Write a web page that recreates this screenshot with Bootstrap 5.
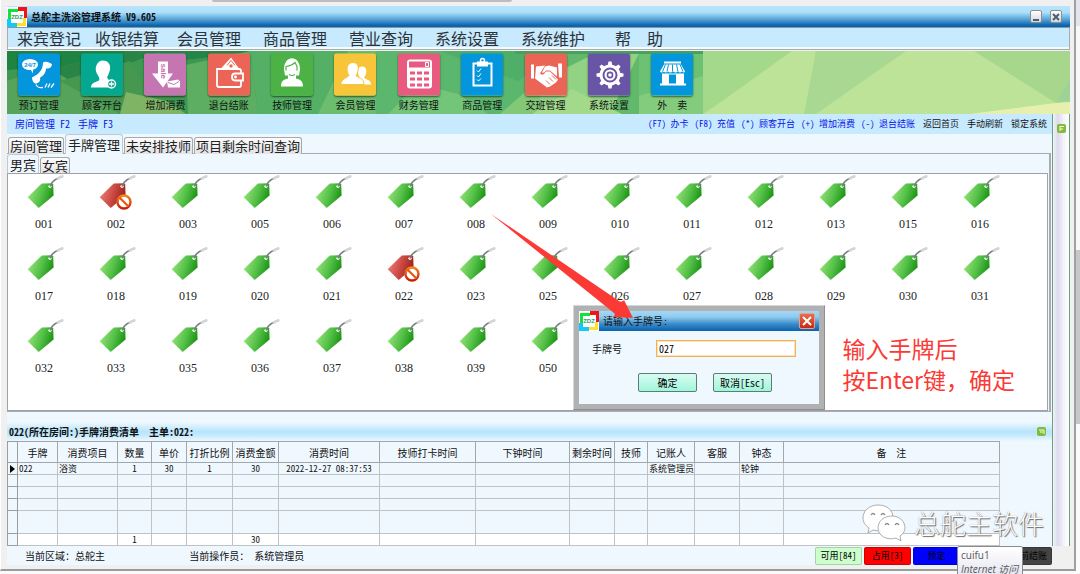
<!DOCTYPE html>
<html lang="zh-CN">
<head>
<meta charset="utf-8">
<meta name="viewport" content="width=device-width, initial-scale=1">
<title>总舵主洗浴管理系统</title>
<link rel="stylesheet" href="https://cdn.jsdelivr.net/npm/bootstrap@5.3.0/dist/css/bootstrap.min.css">
<style>
  :root { --ice:#f0f8ff; --sky:#c8eaff; --line:#a9abae; --frame:#f0f0f0; }
  body { font-family:"Noto Sans Mono CJK SC","Noto Sans CJK SC",sans-serif; font-size:10px; line-height:12px; color:#111; background:#fafafa; overflow:hidden; }
  button, input { font-family:inherit; }
  a { text-decoration:none; color:inherit; }
  .app-window { background:var(--frame); border-right:2px solid #9fa0a2; border-bottom:2px solid #9a9b9d; border-left:1px solid #fff; padding:6px 4px 4px 6px; margin-bottom:3px; min-width:0; }
  .behind-tab { position:absolute; top:0; left:212px; width:300px; height:2px; background:#bdbdbd; border-radius:0 0 3px 3px; }
  .desk-edge { width:4px; background:#fbfbfb; }
  .desk-edge .edge-top { height:26px; background:#e4e5ec; }
  .desk-edge .edge-gap { height:224px; background:#f8f8f8; }
  .desk-edge .edge-thumb { height:174px; background:#c6c7c9; }

  .title-bar { height:21px; background:linear-gradient(#b9e4fc 0,#aee0fb 30%,#5ba6d8 62%,#0a66b2 92%,#0a62ab 100%); font-weight:700; }
  .win-btn { width:12px; height:13px; padding:0; border:1px solid #8a8f94; border-radius:2px; background:linear-gradient(#fff,#d3d6da); line-height:0; }
  .menu-strip { height:23px; background:var(--sky); border:1px solid var(--line); border-top-color:#8f9498; box-shadow:inset 0 -2px #f4faff; display:grid; grid-template-columns:78px 82px 86px 86px 86px 86px 94px 60px; padding-left:9px; font-size:16px; line-height:20px; color:#2c3338; }

  .ribbon { height:63px; margin-top:1px; position:relative; background:#a9d98f; overflow:hidden; }
  .ribbon-art { position:absolute; inset:0; width:100%; height:100%; }
  .ribbon-items { position:relative; display:grid; grid-template-columns:repeat(11,1fr); width:697px; padding-top:2px; }
  .ribbon-btn { background:none; border:0; padding:0; display:flex; flex-direction:column; align-items:center; gap:3px; font-size:10px; line-height:12px; color:#111; white-space:pre; }
  .ribbon-btn svg { width:42px; height:43px; border-radius:3px; box-shadow:0 1px 2px rgba(0,0,0,.55); color:#fff; }

  .short-strip { height:20px; background:var(--sky); font-size:9px; line-height:20px; padding:0 5px 0 8px; white-space:nowrap; }
  .key-links { color:#0a14e6; }
  .side-rail { width:18px; background:linear-gradient(90deg,#f3f1fb,#dcdaec 30%,#f6f4fb 70%,#fff); border-left:1px solid #69a478; border-right:1px solid #69a478; padding:10px 0 0 4px; margin-bottom:19px; }
  .mini-toggle { width:9px; height:9px; border:0; border-radius:2px; padding:0; background:#84b93c; display:block; line-height:0; }

  .tab-strip { gap:1px; padding:0 0 0 1px; margin-bottom:-1px; position:relative; align-items:flex-end; }
  .tab-strip button { border:1px solid #a6a8aa; border-bottom:0; border-radius:3px 3px 0 0; background:linear-gradient(#fdfdfd,#e2e3e5); font-size:13px; line-height:16px; padding:0 1px; height:17px; white-space:nowrap; color:#222; }
  .tab-strip button.active { background:var(--ice); height:20px; line-height:18px; border-color:#c4c9cd; padding:0 2px; }
  .outer-pane { border:1px solid var(--line); border-right-width:2px; border-left:0; margin-right:1px; }
  .sub-tabs { padding-left:0; }
  .tag-pane { background:#fff; border:1px solid #9fa2a6; margin-right:1px; position:relative; }
  .tag-grid { display:grid; grid-template-columns:repeat(auto-fill,72px); grid-auto-rows:72px; }
  .tag-cell { border:0; background:none; padding:0; display:flex; flex-direction:column; align-items:center; gap:6px; font:12px/12px "Liberation Serif",serif; color:#222; }
  .tag-cell svg { width:40px; height:38px; }

  .pointer-arrow { position:absolute; right:411px; bottom:87px; width:150px; height:112px; z-index:5; pointer-events:none; }
  .hint { position:absolute; right:32px; bottom:15px; color:#fb3a36; font:23px/31px "Noto Sans CJK SC",sans-serif; white-space:nowrap; }
  .tag-dialog { position:absolute; right:222px; bottom:0; width:252px; border:1px solid #d6d6d6; border-right-color:#8e8e8e; border-bottom-color:#8e8e8e; background:#b0b1b2; padding:5px; z-index:4; }
  .dialog-body { background:var(--ice); padding:9px 23px 12px 13px; }
  .dialog-title { height:20px; background:linear-gradient(#a5d8f6,#8ecbf0 30%,#3b8bc8 65%,#0a62ab); }
  .dialog-close { width:16px; height:16px; padding:0; border:1px solid #e7a08d; border-radius:2px; background:linear-gradient(#ea6d4d,#c9290f); line-height:0; }
  .tag-input { width:140px; height:17px; border:1px solid #f2b253; box-shadow:inset 0 0 0 1px #fde3b8; padding:0 2px; font-size:10px; background:#fff; outline:0; }
  .mint-btn { width:59px; height:19px; border:1px solid #5d7d74; border-radius:2px; background:linear-gradient(#d9fbf1,#a0f6da); font-size:10px; line-height:16px; padding:0; color:#000; }

  .list-head { height:19px; margin-top:10px; padding:0 6px 0 2px; background:linear-gradient(#f0f8ff,#b8e5fb 50%,#c4e9fd 70%,#ecf8ff); font-weight:700; }
  .bill { width:95%; table-layout:fixed; border-collapse:collapse; font-size:9px; line-height:11px; }
  .bill th, .bill td { border:1px solid #c0c2c4; padding:0 1px; text-align:center; white-space:nowrap; height:12px; overflow:hidden; }
  .bill th { font-size:10px; font-weight:400; height:21px; border-color:#a4a6a9; }
  .bill tr > :first-child { border-color:#9b9da0; }
  .bill .txt { text-align:left; }
  .bill .roomy td { height:23px; }
  .bill tfoot td { background:#fff; }
  .bill tfoot td:first-child { background:var(--ice); }

  .status-strip { height:19px; padding-left:18px; }
  .area-note { flex:0 0 16%; }
  .state-group { flex:0 0 237px; gap:2px; }
  .state-btn { width:47px; height:18px; border:1px solid rgba(0,0,0,.18); border-radius:2px; font-size:9px; line-height:16px; padding:0; color:#000; }
  .net-tip { position:absolute; left:142px; top:-1px; width:66px; height:32px; border:1px solid #8b8b8b; border-radius:2px; background:linear-gradient(#fff,#e4e5f0); font:10px/14px "Open Sans","Noto Sans CJK SC",sans-serif; color:#575757; padding:1px 3px; white-space:nowrap; z-index:6; }
  .brand-mark { position:absolute; right:8px; bottom:4px; font:300 26px/32px "Noto Sans CJK SC",sans-serif; color:#fff; text-shadow:1px 1px 1px #666, 0 0 1px #777; white-space:nowrap; }
</style>
</head>
<body class="vh-100 d-flex">

<svg width="0" height="0" class="position-absolute" aria-hidden="true">
  <defs>
    <linearGradient id="leaf" x1="0" y1=".3" x2="1" y2=".6"><stop offset="0" stop-color="#96e878"/><stop offset=".55" stop-color="#52be46"/><stop offset="1" stop-color="#15900f"/></linearGradient>
    <linearGradient id="brick" x1="0" y1=".3" x2="1" y2=".6"><stop offset="0" stop-color="#ee8078"/><stop offset=".5" stop-color="#cb4a44"/><stop offset="1" stop-color="#981c14"/></linearGradient>
    <linearGradient id="ember" x1="0" y1="0" x2="0" y2="1"><stop offset="0" stop-color="#f88420"/><stop offset="1" stop-color="#c81e08"/></linearGradient>
    <symbol id="tag-string" viewBox="0 0 40 38"><circle cx="26" cy="12.300" r="1.600" fill="#fff"/><path d="M26 12.500C28 6 33 4.500 38.500 2.500" fill="none" stroke="#77797d" stroke-width="1.600"/><path d="M33 5.500c2-2.500 4-3 6.500-3.500" fill="none" stroke="#d5d5d5" stroke-width="2.500"/></symbol>
    <symbol id="tag-free" viewBox="0 0 40 38"><path d="M3.700 23.300 17.700 9.500 28 9.300l1.200 1.200.4 11L14.700 33.900z" fill="url(#leaf)"/><use href="#tag-string"/></symbol>
    <symbol id="tag-busy" viewBox="0 0 40 38"><path d="M3.700 23.300 17.700 9.500 28 9.300l1.200 1.200.4 11L14.700 33.900z" fill="url(#brick)"/><use href="#tag-string"/><circle cx="28" cy="28" r="6.500" fill="#fff" stroke="url(#ember)" stroke-width="2.400"/><path d="m23.500 23.500 9 9" stroke="#e85a12" stroke-width="2.200"/></symbol>
    <symbol id="zdz" viewBox="0 0 20 20"><path fill="#fff" d="M0 0h20v20H0z"/><path fill="#12e23a" d="M1 2h10v3H4v7H1z"/><path fill="#f01414" d="M11 0h9v11h-3V4h-6z"/><path fill="#fde12c" d="M19 11v8H9v-3h7v-5z"/><path fill="#14c8fa" d="M0 12h4v4h6v4H0z"/><text x="10" y="12" text-anchor="middle" font-family="Liberation Sans" font-weight="700" font-size="6" fill="#2c9c68">ZDZ</text></symbol>
  </defs>
</svg>

<div class="behind-tab"></div>
<main class="app-window flex-grow-1 d-flex flex-column">
  <header class="title-bar d-flex align-items-center pe-2 flex-shrink-0">
    <svg width="20" height="20" aria-hidden="true"><use href="#zdz"/></svg>
    <span class="me-auto ps-1 lh-1">总舵主洗浴管理系统 V9.605</span>
    <button class="win-btn me-2" aria-label="最小化"><svg width="10" height="10"><path d="M2 8h6" stroke="#4b6072" stroke-width="2"/></svg></button>
    <button class="win-btn" aria-label="关闭"><svg width="10" height="10"><path d="m2 2 6 6m0-6L2 8" stroke="#4b6072" stroke-width="2"/></svg></button>
  </header>

  <nav class="menu-strip flex-shrink-0" aria-label="主菜单">
    <a href="#">来宾登记</a><a href="#">收银结算</a><a href="#">会员管理</a><a href="#">商品管理</a><a href="#">营业查询</a><a href="#">系统设置</a><a href="#">系统维护</a><a href="#">帮　助</a>
  </nav>

  <section class="ribbon flex-shrink-0">
    <svg class="ribbon-art" viewBox="7 50 1063 63" preserveAspectRatio="none" aria-hidden="true">
      <path fill="#3f9852" d="M7 50h270v63H7z"/><path fill="#1f8442" d="M7 50h125l-73 16-52 3z"/><path fill="#2a8446" d="m59 66 73-16h30l-32 12-71 20z"/><path fill="#56a45c" d="m7 80 40-14 80 47H7z"/><path fill="#46974f" d="m60 80 70-20 30 53h-40z"/><path fill="#7fb465" d="m120 113 6-22 40 9 20 13z"/><path fill="#258448" d="M160 50h95l-60 8-40 3z"/><path fill="#5dae62" d="m186 64 64-14 8 63h-70z"/>
      <path fill="#53b064" d="M250 50h150l-20 63H258z"/><path fill="#6cbd6e" d="m318 113 30-63h60l-20 63z"/><path fill="#5cb76e" d="M376 50h190v63H376z"/><path fill="#73c579" d="m388 113 30-30 40 10 30 20z"/><path fill="#4fae68" d="M440 50h120l-42 30z"/><path fill="#82c877" d="m500 113 40-35 60 35z"/><path fill="#62b96b" d="M560 50h143v63H560z"/><path fill="#92d285" d="m540 80 60-30h40l-30 63h-70z"/><path fill="#a2d98a" d="m572 88 50 25h-90z"/><path fill="#6cc272" d="M639 50h64v63h-64z"/><path fill="#83cc7d" d="m639 95 64-20v38h-64z"/><path fill="#4aa05f" d="M515 50h188v3H515z"/>
      <path fill="#a4d98b" d="M703 50h112l-8 63H703z"/><path fill="#bde398" d="m718 103 74-53h24l-11 63H703z"/><path fill="#a9d892" d="M816 50h90l-90 63h-12z"/><path fill="#bde398" d="m906 50 70 0 94 52v11H816z"/><path fill="#a7d78d" d="M974 50h96v30l-14 22z"/><path fill="#9fd297" d="m1070 78-14 24 14-2z"/><path fill="#e6efae" d="m970 113 86-11 14-1v12z"/>
    </svg>
    <div class="ribbon-items">
      <button class="ribbon-btn"><svg viewBox="0 0 42 42"><path fill="#0496dc" d="M0 0h42v42H0z"/><ellipse cx="12" cy="11" rx="8" ry="5.500" fill="#fff"/><path d="m12 15 3 5 0-5z" fill="#fff"/><text x="12" y="13.500" text-anchor="middle" font-family="Liberation Sans" font-weight="700" font-size="6" fill="#0496dc">24/7</text><path fill="#fff" d="M25 9c2-2 8 0 9 2-1 4-3 4-6 4 0 4-3 8-6 9 1 4-2 6-5 6-2-1-3-4-3-6 3-2 6-3 8-6 2-2 3-6 3-9z"/><path d="M18 31c2 4 4 3 7 3m2 0 2-4m1 4 2-4m1 4 3-4" fill="none" stroke="#fff" stroke-width="1.300"/></svg>预订管理</button>
      <button class="ribbon-btn"><svg viewBox="0 0 42 42"><path fill="#04a790" d="M0 0h42v42H0z"/><path fill="#fff" d="M22 7c5 0 8 4 7 9-1 4-2 6-3 8l3 4-1 6H10c0-4 3-5 8-7 1-2 0-3-1-5-5-7-1-15 5-15z"/><circle cx="30.500" cy="30.500" r="4" fill="#04a790" stroke="#fff" stroke-width="1.500"/><path d="M30.500 28v5M28 30.500h5" stroke="#fff" stroke-width="1.400"/></svg>顾客开台</button>
      <button class="ribbon-btn"><svg viewBox="0 0 42 42"><path fill="#c575b1" d="M0 0h42v42H0z"/><path fill="#fff" d="M14 8h10v12h5L19 34 8 20h6z"/><text transform="translate(17 10) rotate(90)" font-family="Liberation Sans" font-weight="700" font-size="8" fill="#c575b1">sale</text><path fill="#fff" d="m23 28 11-2 2 2v6H24z"/><path d="m24 29 6 2 5-3" fill="none" stroke="#c575b1"/></svg>增加消费</button>
      <button class="ribbon-btn"><svg viewBox="0 0 42 42"><path fill="#eb6556" d="M0 0h42v42H0z"/><path d="m13 15 10-11 8 11" fill="#fff"/><path d="m19 12 4-5 4 5" fill="none" stroke="#eb6556"/><circle cx="23" cy="12.500" r="1.700" fill="#eb6556"/><path d="M9 15.500h22q2 0 2 2v14q0 2-2 2H11q-2 0-2-2z" fill="#eb6556" stroke="#fff" stroke-width="1.800"/><path d="M35 20h-8q-3 0-3 3.500t3 3.500h8z" fill="#eb6556" stroke="#fff" stroke-width="1.800"/><circle cx="27.500" cy="23.500" r="1.400" fill="#fff"/></svg>退台结账</button>
      <button class="ribbon-btn"><svg viewBox="0 0 42 42"><path fill="#4cb245" d="M0 0h42v42H0z"/><path fill="#fff" d="M13 16c0-15 16-15 16 0l-1 6h-3v3c5 1 7 3 7 8H10c0-5 2-7 7-8v-3h-3z"/><path d="M15 17v-4q6-1 9-4l2 4v4m-8 4q3 2 6 0" fill="none" stroke="#4cb245" stroke-width="1.200"/></svg>技师管理</button>
      <button class="ribbon-btn"><svg viewBox="0 0 42 42"><path fill="#f8c53a" d="M0 0h42v42H0z"/><path fill="#fff" d="M28 13c6 0 5 8 2 11 1 2 7 2 7 7h-9l-3-8c-2-5-1-10 3-10z"/><path fill="#fff" stroke="#f8c53a" d="M19 9c7 0 6 9 3 13 1 2 8 2 8 9H7c0-6 7-7 8-9-3-4-3-13 4-13z"/></svg>会员管理</button>
      <button class="ribbon-btn"><svg viewBox="0 0 42 42"><path fill="#e85a80" d="M0 0h42v42H0z"/><rect x="9" y="6" width="25" height="29" rx="3" fill="#fff"/><path d="M11 8h21v6H11zM12 18h5v3h-5zm7 0h5v3h-5zm7 0h5v3h-5zM12 24h5v3h-5zm7 0h5v3h-5zm7 0h5v3h-5zM12 30h5v3h-5zm7 0h5v3h-5zm7 0h5v3h-5z" fill="#e85a80"/><path d="M27.500 9h3v4h-3z" fill="none" stroke="#fff"/></svg>财务管理</button>
      <button class="ribbon-btn"><svg viewBox="0 0 42 42"><path fill="#0496dc" d="M0 0h42v42H0z"/><rect x="12.500" y="10" width="18" height="22" fill="none" stroke="#fff" stroke-width="2"/><path d="M16 8h11v5H16z" fill="#fff"/><circle cx="21.500" cy="7" r="2" fill="none" stroke="#fff" stroke-width="1.500"/><path d="m16 17 1.500 1.500L20 15m-4 7 1.500 1.500L20 20m-4 6 1.500 1.500L20 25" fill="none" stroke="#fff"/></svg>商品管理</button>
      <button class="ribbon-btn"><svg viewBox="0 0 42 42"><path fill="#eb6556" d="M0 0h42v42H0z"/><path fill="#fff" d="M6 11h3v14H6zm27-1h4v14h-3zM11 13l9-1-5 8q3 3 6-2h4l8 8-2 3-3 2-3 2-3 1-12-9z"/><path fill="#fff" d="m20 13 4-1 8 2v9l-7-6h-4q-2 3-4 2z"/><path d="m21 27 4 4m-1-7 4 4m-1-6 4 4" stroke="#eb6556"/></svg>交班管理</button>
      <button class="ribbon-btn"><svg viewBox="0 0 42 42"><path fill="#6955a5" d="M0 0h42v42H0z"/><g fill="#fff"><path id="cog" d="m19.500 13 1-5h3l1 5v17l-1 5h-3l-1-5z"/><use href="#cog" transform="rotate(45 22 21.500)"/><use href="#cog" transform="rotate(90 22 21.500)"/><use href="#cog" transform="rotate(135 22 21.500)"/><circle cx="22" cy="21.500" r="10.500"/></g><circle cx="22" cy="21.500" r="6.500" fill="none" stroke="#6955a5" stroke-width="2"/><circle cx="22" cy="21.500" r="2.600" fill="none" stroke="#6955a5" stroke-width="1.600"/></svg>系统设置</button>
      <button class="ribbon-btn"><svg viewBox="0 0 42 42"><path fill="#0496dc" d="M0 0h42v42H0z"/><path fill="#fff" d="M13 8h17v2H13zm0 3h17l4 7q-1 2-3 0-2 2-4 0-2 2-5 0-3 2-5 0-2 2-4 0-3 2-4 0zM11 20h22v10h2v2H9v-2h2z"/><path fill="#0496dc" d="M18 21h7v9h-7z"/><path d="m14.500 11-3 7m6-7-1.500 7m5.500-7v7m4-7 1.500 7m2-7 3 7" stroke="#0496dc"/></svg>外　卖</button>
    </div>
  </section>

  <div class="d-flex flex-grow-1">
    <div class="d-flex flex-column flex-grow-1" style="background:var(--ice);min-width:0">
      <nav class="short-strip d-flex flex-shrink-0" aria-label="快捷键">
        <span class="key-links d-flex gap-2 me-auto" style="font-size:10px"><a href="#">房间管理 F2</a><a href="#">手牌 F3</a></span>
        <span class="key-links d-flex me-2" style="gap:6px"><a href="#">(F7) 办卡</a><a href="#">(F8) 充值</a><a href="#">(*) 顾客开台</a><a href="#">(+) 增加消费</a><a href="#">(-) 退台结账</a></span>
        <span class="d-flex gap-2"><a href="#">返回首页</a><a href="#">手动刷新</a><a href="#">锁定系统</a></span>
      </nav>

      <div class="tab-strip d-flex" role="tablist">
        <button role="tab">房间管理</button><button role="tab" class="active">手牌管理</button><button role="tab">未安排技师</button><button role="tab">项目剩余时间查询</button>
      </div>
      <section class="outer-pane flex-grow-1 d-flex flex-column">
        <div class="tab-strip sub-tabs d-flex" role="tablist">
          <button role="tab" class="active">男宾</button><button role="tab">女宾</button>
        </div>
        <div class="tag-pane flex-grow-1">
          <div class="tag-grid" id="tags"></div>

          <svg class="pointer-arrow" viewBox="488 211 150 112" aria-hidden="true"><path fill="#fb3a36" d="m493 214 128 87c2 1 3 1 5-1l9 18-20-1q3-2 1-4z"/></svg>
          <p class="hint mb-0">输入手牌后<br>按Enter键，确定</p>

          <form class="tag-dialog" onsubmit="return false">
            <div class="dialog-title d-flex align-items-center">
              <svg width="20" height="20" aria-hidden="true"><use href="#zdz"/></svg>
              <span class="me-auto ps-1">请输入手牌号:</span>
              <button type="button" class="dialog-close me-1" aria-label="关闭"><svg width="14" height="14"><path d="m3 3 8 8m0-8-8 8" stroke="#fff" stroke-width="2"/></svg></button>
            </div>
            <div class="dialog-body">
              <div class="d-flex justify-content-between align-items-center">
                <label for="tagNo">手牌号</label><input id="tagNo" class="tag-input" type="text" value="027" autofocus>
              </div>
              <div class="d-flex justify-content-end mt-3">
                <button type="submit" class="mint-btn me-3">确定</button><button type="button" class="mint-btn me-4">取消[Esc]</button>
              </div>
            </div>
          </form>
        </div>
      </section>

      <section class="position-relative flex-shrink-0">
        <div class="list-head d-flex align-items-center justify-content-between">
          <span>022(所在房间:)手牌消费清单　主单:022:</span>
          <button class="mini-toggle" aria-label="收起"><svg width="9" height="9"><path d="M2 3h5M7 3v4M3 5h3" stroke="#f4ffd8" fill="none"/></svg></button>
        </div>
        <table class="bill">
          <colgroup><col style="width:10px"><col style="width:40px"><col style="width:60px"><col style="width:34px"><col style="width:35px"><col style="width:46px"><col style="width:46px"><col style="width:101px"><col style="width:96px"><col style="width:94px"><col style="width:45px"><col style="width:33px"><col style="width:47px"><col style="width:45px"><col style="width:44px"><col></colgroup>
          <thead><tr><th></th><th>手牌</th><th>消费项目</th><th>数量</th><th>单价</th><th>打折比例</th><th>消费金额</th><th>消费时间</th><th>技师打卡时间</th><th>下钟时间</th><th>剩余时间</th><th>技师</th><th>记账人</th><th>客服</th><th>钟态</th><th>备　注</th></tr></thead>
          <tbody id="billRows">
            <tr><td><svg width="5" height="8" class="d-block mx-auto"><path d="M0 0v8l5-4z"/></svg></td><td class="txt">022</td><td class="txt">浴资</td><td>1</td><td>30</td><td>1</td><td>30</td><td>2022-12-27 08:37:53</td><td></td><td></td><td></td><td></td><td class="txt">系统管理员</td><td></td><td class="txt">轮钟</td><td></td></tr>
          </tbody>
          <tfoot><tr><td></td><td></td><td></td><td>1</td><td></td><td></td><td>30</td><td></td><td></td><td></td><td></td><td></td><td></td><td></td><td></td><td></td></tr></tfoot>
        </table>
        <div class="brand-mark d-flex align-items-center gap-2">
          <svg width="44" height="38" viewBox="0 0 44 38" aria-hidden="true"><g fill="#fff" stroke="#999" stroke-width=".8"><path d="M16 1C7 1 1 7 1 14c0 4 2 7 6 10l-1 5 5-3c13 3 20-4 20-12S25 1 16 1z"/><path d="M30 12c-8 0-14 5-14 12s8 13 18 10l5 3-1-5c3-2 5-5 5-8 0-7-6-12-13-12z"/></g><g fill="none" stroke="#888" stroke-width="1.300"><path d="M9 11q2-3 4 0m6 0q2-3 4 0M23 21q2-3 4 0m6 0q2-3 4 0"/></g></svg>
          <span>总舵主软件</span>
        </div>
      </section>

      <footer class="status-strip d-flex align-items-center flex-shrink-0">
        <span class="area-note">当前区域：总舵主</span><span class="me-auto">当前操作员： 系统管理员</span>
        <div class="state-group d-flex position-relative">
          <button class="state-btn" style="background:#ccffcc">可用[84]</button><button class="state-btn" style="background:#f00">占用[3]</button><button class="state-btn" style="background:#00f">预定</button><button class="state-btn flex-grow-1 text-end pe-1" style="background:#444">前结账</button>
          <div class="net-tip" role="tooltip">cuifu1<br><i>Internet 访问</i></div>
        </div>
      </footer>
    </div>
    <aside class="side-rail flex-shrink-0"><button class="mini-toggle" aria-label="展开"><svg width="9" height="9"><path d="M3 2v5M3 2.500h4M3 5h3" stroke="#f4ffd8" fill="none"/></svg></button></aside>
  </div>
</main>
<div class="desk-edge flex-shrink-0"><div class="edge-top"></div><div class="edge-gap"></div><div class="edge-thumb"></div></div>

<script>
  const numbers = '001 002 003 005 006 007 008 009 010 011 012 013 015 016 017 018 019 020 021 022 023 025 026 027 028 029 030 031 032 033 035 036 037 038 039 050'.split(' ');
  const busy = ['002', '022'];
  document.getElementById('tags').innerHTML = numbers.map(n =>
    `<button class="tag-cell" type="button"><svg aria-hidden="true"><use href="#tag-${busy.includes(n) ? 'busy' : 'free'}"/></svg>${n}</button>`).join('');
  const blank = '<td></td>'.repeat(16);
  document.getElementById('billRows').insertAdjacentHTML('beforeend',
    `<tr>${blank}</tr>`.repeat(3) + `<tr class="roomy">${blank}</tr>`);
  const tagNo = document.getElementById('tagNo');
  tagNo.focus();
  tagNo.setSelectionRange(3, 3);
</script>
<script src="https://cdn.jsdelivr.net/npm/bootstrap@5.3.0/dist/js/bootstrap.bundle.min.js"></script>
</body>
</html>
